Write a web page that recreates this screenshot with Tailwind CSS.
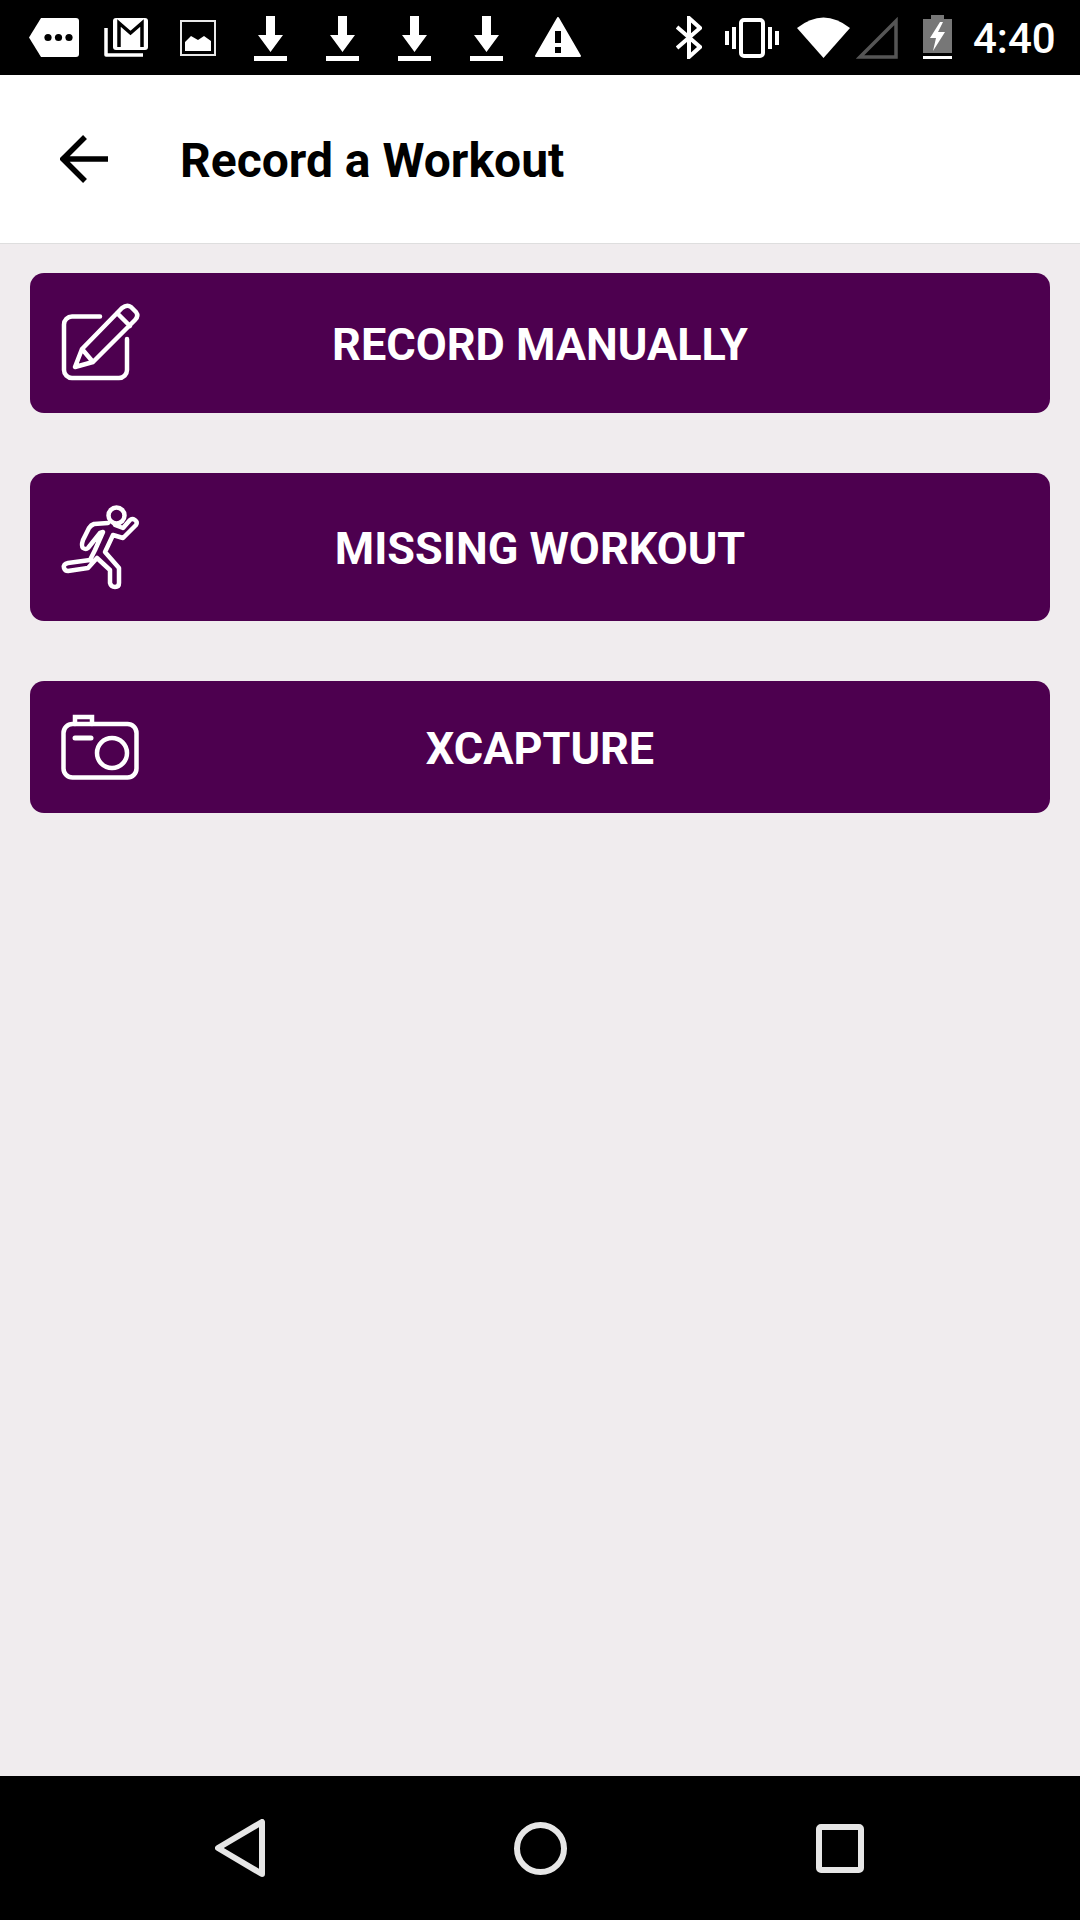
<!DOCTYPE html>
<html>
<head>
    <meta charset="UTF-8">
    <title>Record a Workout</title>
    <script src="https://cdn.jsdelivr.net/npm/@tailwindcss/browser@4"></script>
</head>
<body class="bg-[#f0ecee] font-['Roboto',sans-serif]">
    <div class="w-[1080px] h-[1920px] flex flex-col overflow-hidden">

        <!-- status bar -->
        <div class="h-[75px] bg-black flex items-center text-white shrink-0">
            <svg class="ml-[29px] mt-[-1px]" width="50" height="39" viewBox="0 0 50 39"><path fill="#fff" d="M12 0H47a3 3 0 0 1 3 3V36a3 3 0 0 1-3 3H12L0 19.5Z"/><circle cx="19" cy="19.5" r="3.6"/><circle cx="29.500" cy="19.5" r="3.6"/><circle cx="40" cy="19.5" r="3.6"/></svg>
            <svg class="ml-[25px] mt-[-1px]" width="44" height="39" viewBox="0 0 44 39"><path fill="none" stroke="#fff" stroke-width="3.500" stroke-linejoin="round" d="M2 10V37H39"/><rect x="9" y="0" width="35" height="32" rx="3" fill="#fff"/><path fill="none" stroke="#000" stroke-width="3.500" d="M15 29V5L26.500 15 38 5V29"/></svg>
            <svg class="ml-[32px] mt-[1px]" width="36" height="36" viewBox="0 0 36 36"><rect x="1" y="1" width="34" height="34" fill="none" stroke="#e8e8e8" stroke-width="2"/><path fill="#fff" d="M5 31V22L11 16 18 20 24 16 31 21V31Z"/></svg>
            <svg class="ml-[38px] mt-[2px]" width="33" height="45" viewBox="0 0 33 45"><path fill="#fff" d="M12 0H21V19H29L16.500 36 4 19H12ZM0 40H33V45H0Z"/></svg>
            <svg class="ml-[39px] mt-[2px]" width="33" height="45" viewBox="0 0 33 45"><path fill="#fff" d="M12 0H21V19H29L16.500 36 4 19H12ZM0 40H33V45H0Z"/></svg>
            <svg class="ml-[39px] mt-[2px]" width="33" height="45" viewBox="0 0 33 45"><path fill="#fff" d="M12 0H21V19H29L16.500 36 4 19H12ZM0 40H33V45H0Z"/></svg>
            <svg class="ml-[39px] mt-[2px]" width="33" height="45" viewBox="0 0 33 45"><path fill="#fff" d="M12 0H21V19H29L16.500 36 4 19H12ZM0 40H33V45H0Z"/></svg>
            <svg class="ml-[32px] mt-[-1px]" width="46" height="40" viewBox="0 0 46 40"><path fill="#fff" stroke="#fff" stroke-width="2" stroke-linejoin="round" d="M23 1 45 39H1Z"/><rect x="20" y="14" width="6" height="12"/><rect x="20" y="30" width="6" height="6"/></svg>

            <svg class="ml-[95px]" width="26" height="43" viewBox="0 0 26 43"><path fill="none" stroke="#fff" stroke-width="4" d="M1 11 24 31 13 41V2L24 12 1 32"/></svg>
            <svg class="ml-[23px]" width="54" height="40" viewBox="0 0 54 40"><rect x="16" y="2" width="22" height="36" rx="3" fill="none" stroke="#fff" stroke-width="4"/><path fill="#fff" d="M0 13H4V27H0ZM7 9H11V31H7ZM43 9H47V31H43ZM50 13H54V27H50Z"/></svg>
            <svg class="ml-[18px]" width="53" height="41" viewBox="0 0 53 41"><path fill="#fff" d="M0 11Q26.500 -10 53 11L26.500 41Z"/></svg>
            <svg class="ml-[6px] mt-[1px]" width="42" height="42" viewBox="0 0 42 42"><path fill="none" stroke="#555" stroke-width="3.500" d="M40 4V40H4Z"/></svg>
            <svg class="ml-[25px] mt-[-1px]" width="29" height="44" viewBox="0 0 29 44"><path fill="#777" d="M8 0H21V4H29V38H0V4H8Z"/><rect y="41" width="29" height="3" fill="#fff"/><path fill="#fff" d="M17 7 7 23H13L10 36 22 17H15L20 7Z"/></svg>
            <span class="ml-[21px] mt-[2px] text-[42px] leading-none font-medium">4:40</span>
        </div>

        <!-- toolbar -->
        <div class="h-[169px] bg-white border-b border-[#dedede] flex items-center shrink-0">
            <svg class="ml-[60px]" width="49" height="48" viewBox="0 0 49 48"><path fill="none" stroke="#000" stroke-width="5.500" d="M48 24H4M25 2 3 24 25 46"/></svg>
            <h1 class="ml-[71px] mt-[4px] text-[48px] font-bold text-black">Record a Workout</h1>
        </div>

        <!-- actions -->
        <div class="flex-1 flex flex-col px-[30px] pt-[29px] gap-[60px]">
            <button class="h-[140px] bg-[#4d004f] rounded-[14px] grid grid-cols-[120px_1fr_120px] items-center text-white">
                <svg class="ml-[25px] mt-[2px]" width="90" height="90" viewBox="0 0 90 90" fill="none" stroke="#fff" stroke-width="4.500" stroke-linecap="round" stroke-linejoin="round"><path d="M45 17.500H17a8 8 0 0 0-8 8V71a8 8 0 0 0 8 8H64a8 8 0 0 0 8-8V40"/><path d="M20 68 27 50 67 9Q72 5 76 8L81 13Q84 17 80 21L38 63ZM27 50 38 63M62 14 75 27"/></svg>
                <span class="mt-[3px] text-[45px] font-bold text-center">RECORD MANUALLY</span>
            </button>
            <button class="h-[148px] bg-[#4d004f] rounded-[14px] grid grid-cols-[120px_1fr_120px] items-center text-white">
                <svg class="ml-[25px]" width="90" height="95" viewBox="0 0 90 95" fill="none" stroke="#fff" stroke-width="4.500" stroke-linejoin="round" stroke-linecap="round"><circle cx="61.500" cy="15.500" r="8"/><path d="M53 23 39 24Q36 25 34 28L28 40Q26 46 28 48 31 50 33 48L45 33 48 32 40 50 35 60 13 63Q8 64 9 68 10 71 13 71L33 68 42 58 55 70V83Q56 87 60 87 64 87 64 83V68L50 52 58 35 68 38 81 25Q83 22 80 20 77 18 75 20L68 28 60 25"/></svg>
                <span class="mt-[3px] text-[45px] font-bold text-center">MISSING WORKOUT</span>
            </button>
            <button class="h-[132px] bg-[#4d004f] rounded-[14px] grid grid-cols-[120px_1fr_120px] items-center text-white">
                <svg class="ml-[31px]" width="78" height="66" viewBox="0 0 78 66" fill="none" stroke="#fff" stroke-width="4.500" stroke-linecap="round"><rect x="2.500" y="10" width="73" height="53.500" rx="9"/><path d="M14 10V3H31V10"/><path d="M14 24H30" stroke-width="5"/><circle cx="51" cy="39" r="15"/></svg>
                <span class="mt-[3px] text-[45px] font-bold text-center">XCAPTURE</span>
            </button>
        </div>

        <!-- nav bar -->
        <div class="h-[144px] bg-black flex items-center shrink-0">
            <svg class="ml-[215px]" width="50" height="58" viewBox="0 0 50 58"><path fill="none" stroke="#e6e6e6" stroke-width="6" stroke-linejoin="round" d="M3 29 47 3V55Z"/></svg>
            <div class="ml-[249px] w-[53px] h-[53px] rounded-full border-[6px] border-[#e6e6e6]"></div>
            <div class="ml-[249px] w-[48px] h-[49px] rounded-[5px] border-[6px] border-[#e6e6e6]"></div>
        </div>
    </div>
</body>
</html>
